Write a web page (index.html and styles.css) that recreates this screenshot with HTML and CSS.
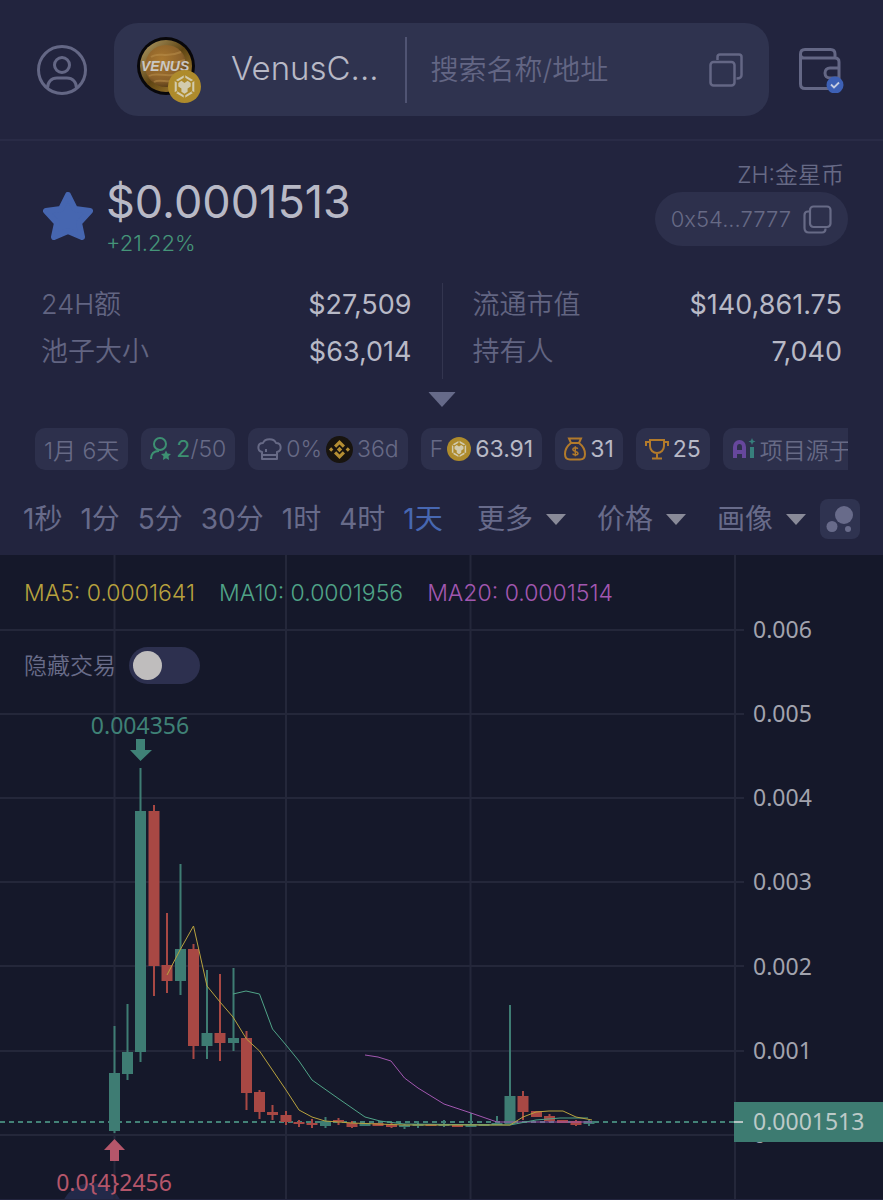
FILE: index.html
```html
<!DOCTYPE html>
<html lang="zh-CN">
<head>
  <meta charset="UTF-8" />
  <title>VenusC $0.0001513</title>
  <meta name="viewport" content="width=device-width, initial-scale=1.0" />
  <link rel="stylesheet" href="styles.css">
</head>
<body>
  <!-- shared symbols -->
  <svg class="defs" aria-hidden="true">
    <symbol id="bnb" viewBox="0 0 32 32">
      <circle cx="16" cy="16" r="16" fill="#ae8b2c" />
      <path d="M16 6 24.500 11V21L16 26 7.500 21V11Z" fill="none" stroke="#d2cbae" stroke-width="2" />
      <path d="M16 3v5M5 9l5 3M27 9l-5 3M5 23l4-2M27 23l-4-2M16 29v-5" stroke="#ae8b2c" stroke-width="1.500" />
      <path d="M10 12.500 13 10.500 16 12.500 19 10.500 22 12.500V16L19 18V21L16 23 13 21V18L10 16Z" fill="#d2cbae" />
    </symbol>
    <symbol id="caret" viewBox="0 0 20 11">
      <path d="M0 0h20L10 11Z" fill="currentColor" />
    </symbol>
  </svg>

  <header class="top-bar">
    <button class="icon-btn" type="button" aria-label="账户">
      <svg width="50" height="50" viewBox="0 0 50 50" fill="none" stroke="currentColor" stroke-width="3">
        <circle cx="25" cy="25" r="23.500" />
        <circle cx="25" cy="20" r="7.500" />
        <path d="M10.500 43c0-6 4-10 9.500-10h10c5.500 0 9.500 4 9.500 10" />
      </svg>
    </button>

    <div class="search">
      <div class="coin">
        <svg width="58" height="58" viewBox="0 0 58 58">
          <defs>
            <linearGradient id="rim" x1="0" y1="0" x2="1" y2="1">
              <stop offset="0" stop-color="#b5a06a" />
              <stop offset=".5" stop-color="#5e4413" />
              <stop offset="1" stop-color="#b38a35" />
            </linearGradient>
            <radialGradient id="planet" cx=".4" cy=".35" r=".7">
              <stop offset="0" stop-color="#a8772f" />
              <stop offset=".7" stop-color="#8a602a" />
              <stop offset="1" stop-color="#4f3615" />
            </radialGradient>
          </defs>
          <circle cx="29" cy="29" r="29" fill="#08070a" />
          <circle cx="29" cy="29" r="26" fill="url(#rim)" />
          <circle cx="29" cy="29" r="21" fill="url(#planet)" />
          <path d="M14 20c8-6 14 2 30-5M10 27c10-7 20 3 38-4M12 39c8-5 18 3 33-3M17 45c6-4 14 2 23-2" fill="none" stroke="#bb914d" stroke-width="2" opacity=".5" />
          <text x="4" y="34" class="coin-text">VENUS</text>
        </svg>
        <svg class="chain" width="33" height="33"><use href="#bnb" /></svg>
      </div>
      <span class="coin-name">VenusC...</span>
      <span class="split"></span>
      <input type="text" class="search-input" placeholder="搜索名称/地址" aria-label="搜索名称/地址" />
      <button class="icon-btn" type="button" aria-label="粘贴">
        <svg width="34" height="34" viewBox="0 0 34 34" fill="none" stroke="currentColor" stroke-width="2.500">
          <rect x="1.500" y="9" width="24" height="23.500" rx="3" />
          <path d="M8.500 7V4c0-1.500 1-2.500 2.500-2.500h19c1.500 0 2.500 1 2.500 2.500v18c0 2-1.500 3.500-5 3.500" />
        </svg>
      </button>
    </div>

    <button class="icon-btn" type="button" aria-label="钱包">
      <svg width="45" height="46" viewBox="0 0 45 46" fill="none" stroke="currentColor" stroke-width="3">
        <path d="M36 11V7c0-3-1.500-4.500-4.500-4.500H6C3 2.500 1.500 4 1.500 7v30c0 3 1.500 4.500 4.500 4.500h29c3 0 5-1.500 5-4.500V15c0-2.500-1.500-4-4-4H5c-2 0-3.500-1-3.500-3.500M40 21h-9c-3 0-5 2-5 5s2 5 5 5h9" />
        <circle cx="36" cy="38" r="8.500" fill="#3d60b5" stroke="none" />
        <path d="m32 37.500 3 3 5-5" stroke="#c4cbe0" stroke-width="1.800" />
      </svg>
    </button>
  </header>

  <main>
    <section class="token">
      <button class="star" type="button" aria-label="收藏">
        <svg width="50" height="48" viewBox="0 0 50 48">
          <path d="m25 3 7 14 15 2-11 12 3 14-14-6-14 6 3-14L3 19l15-2Z" fill="currentColor" stroke="currentColor" stroke-width="6" stroke-linejoin="round" />
        </svg>
      </button>
      <div class="price-box">
        <h1 class="price">$0.0001513</h1>
        <p class="change">+21.22%</p>
      </div>
      <div class="address-box">
        <span class="zh-name">ZH:金星币</span>
        <button class="address" type="button">
          0x54...7777
          <svg width="29" height="29" viewBox="0 0 29 29" fill="none" stroke="currentColor" stroke-width="2.200">
            <rect x="7" y="1.500" width="20.500" height="20.500" rx="3.500" />
            <path d="M6 6.500H5C2.500 6.500 1.500 8 1.500 10v13c0 3 1.500 4.500 4.500 4.500h13c2.500 0 3.500-1 3.500-4" />
          </svg>
        </button>
      </div>
    </section>

    <section class="stats">
      <dl>
        <div><dt>24H额</dt><dd>$27,509</dd></div>
        <div><dt>池子大小</dt><dd>$63,014</dd></div>
      </dl>
      <dl>
        <div><dt>流通市值</dt><dd>$140,861.75</dd></div>
        <div><dt>持有人</dt><dd>7,040</dd></div>
      </dl>
    </section>
    <button class="expand" type="button" aria-label="展开">
      <svg width="28" height="15" viewBox="0 0 20 11"><use href="#caret" /></svg>
    </button>

    <div class="tags">
      <span class="tag">1月 6天</span>
      <span class="tag">
        <svg class="green" width="22" height="24" viewBox="0 0 22 24" fill="none" stroke="currentColor" stroke-width="2">
          <circle cx="10" cy="7" r="6" />
          <path d="M1 22c0-5 3-8 8-8" />
          <path d="m16 13.500 1.500 3 3.500.5-2.500 2.300.6 3.700-3.100-1.700-3.100 1.700.6-3.700L11 17l3.500-.5Z" fill="currentColor" stroke="none" />
        </svg>
        <span><b class="green">2</b>/50</span>
      </span>
      <span class="tag">
        <svg width="25" height="23" viewBox="0 0 25 23" fill="none" stroke="currentColor" stroke-width="2" stroke-linejoin="round">
          <path d="M5 21v-7c-5-1-5-9 1-9 2-5 11-5 13 0 6 0 6 8 1 9v7ZM5 17h15M9 11v3" />
        </svg>
        0%
        <svg width="27" height="27" viewBox="0 0 27 27">
          <circle cx="13.500" cy="13.500" r="13.500" fill="#18140f" />
          <path d="m8 9.500 5.500-5.500L19 9.500l-2.200 2.200-3.300-3.300-3.300 3.300ZM8 17.500l2.200-2.200 3.300 3.300 3.300-3.300 2.200 2.200-5.500 5.500ZM3 13.500l2.200-2.200 2.200 2.200-2.200 2.200ZM19.600 13.500l2.200-2.200 2.200 2.200-2.200 2.200ZM10.800 13.500l2.700-2.700 2.700 2.700-2.700 2.700Z" fill="#b48e33" />
        </svg>
        36d
      </span>
      <span class="tag">
        F
        <svg width="24" height="24"><use href="#bnb" /></svg>
        <b>63.91</b>
      </span>
      <span class="tag">
        <svg class="amber" width="22" height="24" viewBox="0 0 22 24" fill="none" stroke="currentColor" stroke-width="2">
          <path d="M5 1.500h12l-2 4.500H7ZM7 6C3 9 1 13 1 17c0 4 2 5.500 5 5.500h10c3 0 5-1.500 5-5.500 0-4-2-8-6-11" />
          <path d="M13.800 11.800c-1-1.500-5-1.300-5 .8 0 2.400 5.200 1.200 5.200 3.600 0 2.200-4.400 2.200-5.400.4M11.300 9.300v10" stroke-width="1.500" />
        </svg>
        <b>31</b>
      </span>
      <span class="tag">
        <svg class="amber" width="24" height="22" viewBox="0 0 24 22" fill="none" stroke="currentColor" stroke-width="2">
          <path d="M5 2h14v6c0 4-3 7-7 7s-7-3-7-7ZM5 4H1v4M19 4h4v4M12 15v5M7 20.500h10" />
        </svg>
        <b>25</b>
      </span>
      <span class="tag">
        <svg width="24" height="22" viewBox="0 0 24 22" fill="none" stroke-width="4">
          <path d="M3 20V9c0-3 2-5 4.500-5S12 6 12 9v11M3 14h9" stroke="#66479c" />
          <path d="M20 9v11" stroke="#377f7c" />
          <path d="m20 0 1 2.500L23.500 3.500 21 4.500 20 7l-1-2.500-2.500-1L19 2.500Z" fill="#377f7c" />
        </svg>
        项目源于
      </span>
    </div>

    <nav class="intervals">
      <div class="times">
        <button type="button">1秒</button>
        <button type="button">1分</button>
        <button type="button">5分</button>
        <button type="button">30分</button>
        <button type="button">1时</button>
        <button type="button">4时</button>
        <button type="button" class="active">1天</button>
      </div>
      <div class="menus">
        <label class="menu">
          <select aria-label="更多周期"><option>更多</option></select>
          <svg width="20" height="11"><use href="#caret" /></svg>
        </label>
        <label class="menu">
          <select aria-label="价格类型"><option>价格</option></select>
          <svg width="20" height="11"><use href="#caret" /></svg>
        </label>
        <label class="menu">
          <select aria-label="画像类型"><option>画像</option></select>
          <svg width="20" height="11"><use href="#caret" /></svg>
        </label>
      </div>
      <button class="bubbles" type="button" aria-label="气泡图">
        <svg width="28" height="28" viewBox="0 0 28 28" fill="currentColor">
          <circle cx="18" cy="10" r="9" />
          <circle cx="6" cy="21.500" r="5.500" />
          <circle cx="22" cy="24" r="3" />
        </svg>
      </button>
    </nav>

    <section class="chart">
      <div class="chart-head">
        <p class="legend">
          <span class="ma5">MA5: 0.0001641</span>
          <span class="ma10">MA10: 0.0001956</span>
          <span class="ma20">MA20: 0.0001514</span>
        </p>
        <label class="hide-trades">
          隐藏交易
          <input type="checkbox" class="switch" />
        </label>
      </div>

      <svg class="plot" viewBox="0 0 883 644">
        <circle cx="92" cy="660" r="32" fill="#232949" />

        <!-- grid -->
        <path class="grid" d="M0 75H744M0 159H744M0 243H744M0 327H744M0 411H744M0 496H744M0 580H744M114.500 0V644M286 0V644M470.500 0V644M735 0V644" />

        <!-- price scale -->
        <g class="scale">
          <text x="753" y="83">0.006</text>
          <text x="753" y="167">0.005</text>
          <text x="753" y="251">0.004</text>
          <text x="753" y="335">0.003</text>
          <text x="753" y="420">0.002</text>
          <text x="753" y="504">0.001</text>
          <text x="753" y="588">0</text>
        </g>

        <path class="last-line" d="M0 567H735" />

        <!-- candles: wicks, then bodies -->
        <path class="up wick" d="M114.500 471V578M127.500 449V525M140.500 213V507M180.500 309V440M207 415V504M233.500 413V496M325.500 562V573M404.500 569V574M418 566V573M444 565V572M471 558V572M497 561V570M510 450V569M589 565V571" />
        <path class="down wick" d="M154 250V441M167 358V438M193.500 389V504M220 419V506M246.500 476V555M259.500 535V564M272.500 550V565M286 556V570M299 565V572M312 564V573M338.500 563V570M352 566V573M391.500 567V573M523 536V565M549.500 559V567M576 565V571" />
        <path class="up body" d="M114.500 518V576M127.500 497V519M140.500 256V497M180.500 394V426M207 478V491M233.500 483V488M325.500 566V571M365 568V571M404.500 570V572M418 569V571M444 569V571M471 569V572M484 569V571M497 568V570M510 541V569M589 566V569" />
        <path class="down body" d="M154 256V411M167 410V426M193.500 394V491M220 478V488M246.500 483V538M259.500 537V557M272.500 557V560M286 560V567M299 567V569M312 568V570M338.500 565V567M352 568V572M378 568V571M391.500 569V572M431 569V571M457.500 569V572M523 541V557M536.500 556V562M549.500 561V566M562.500 565V568M576 566V570" />

        <!-- moving averages -->
        <path class="ma ma20" d="M365 500 378 502 391 506 404.500 523 418 533 431 541 444 549 471 558 497 567 592 567" />
        <path class="ma ma10" d="M233 439 246 436 259.500 439 272.500 474 286 490 299 506 312 525 339 544 365 562 380 566 404 569 510 570 536 565 560 563 588 563" />
        <path class="ma ma5" d="M167 420 180 395 193.500 371 207 431 220 447 233 462 246.500 484 259.500 496 286 535 299 555 312 562 325 566 352 568 404 570 510 570 523 562 536 557 549 556 563 556 576 562 592 565" />

        <!-- high and low marks -->
        <path class="high" d="M136 184h9v11h7l-11.500 11L130 195h6Z" />
        <text class="high" x="140" y="179">0.004356</text>
        <path class="low" d="M114.500 584 125 595h-6v11h-9V595h-6Z" />
        <text class="low" x="114" y="636">0.0{4}2456</text>

        <!-- last price -->
        <rect x="734" y="547" width="149" height="40" fill="#3d7b71" />
        <path d="M734 567h9" stroke="#b6c4c3" stroke-width="2" />
        <text class="last-price" x="753" y="575">0.0001513</text>
      </svg>
    </section>
  </main>
</body>
</html>
```
FILE: styles.css
```css
* {
  margin: 0;
  padding: 0;
  box-sizing: border-box;
}

body {
  background: #22243e;
  color: #b8b9c6;
  font-family: Inter, 'Noto Sans CJK SC', sans-serif;
  font-weight: 350;
  min-height: 100vh;
  overflow-x: hidden;
}

button, input, select {
  font: inherit;
  color: inherit;
  background: none;
  border: none;
}

button {
  cursor: pointer;
}

svg {
  display: block;
  flex-shrink: 0;
}

b {
  font-weight: 400;
}

.defs {
  display: none;
}

/* header */
.top-bar {
  display: flex;
  align-items: center;
  padding: 23px 39px 23px 37px;
  border-bottom: 2px solid #292b46;
}

.icon-btn {
  color: #646785;
}

.search {
  flex: 1;
  min-width: 0;
  display: flex;
  align-items: center;
  height: 93px;
  margin: 0 30px 0 27px;
  padding: 0 26px 0 23px;
  border-radius: 24px;
  background: #2f334f;
}

.coin {
  position: relative;
  padding-bottom: 8px;
}

.coin-text {
  font: italic bold 14px 'Liberation Sans', sans-serif;
  fill: #c9c7c4;
}

.chain {
  position: absolute;
  right: -6px;
  bottom: 0;
}

.coin-name {
  margin-left: 36px;
  padding-bottom: 3px;
  font-size: 33px;
}

.split {
  width: 2px;
  height: 66px;
  margin: 0 24px 0 26px;
  background: #505473;
}

.search-input {
  flex: 1;
  min-width: 0;
  font-size: 28px;
  outline: none;
}

.search-input::placeholder {
  color: #636684;
  opacity: 1;
}

/* price */
.token {
  display: flex;
  padding: 17px 35px 0 43px;
}

.star {
  align-self: flex-start;
  margin-top: 34px;
  color: #4666b0;
}

.price-box {
  flex: 1;
  margin: 16px 0 0 13px;
}

.price {
  font-size: 45px;
  line-height: 56px;
  font-weight: 400;
}

.change {
  font-size: 22px;
  line-height: 26px;
  color: #459579;
}

.address-box {
  display: flex;
  flex-direction: column;
  align-items: flex-end;
  color: #676a86;
}

.zh-name {
  margin-right: 4px;
  font-size: 23px;
  line-height: 34px;
}

.address {
  display: flex;
  align-items: center;
  gap: 12px;
  height: 54px;
  padding: 0 16px;
  border-radius: 27px;
  background: #2d304c;
  font-size: 22px;
}

/* stats */
.stats {
  display: grid;
  grid-template-columns: 1fr 1fr;
  padding: 27px 41px 0;
}

.stats dl {
  padding-right: 30px;
  font-size: 27px;
}

.stats dl + dl {
  padding: 0 0 0 30px;
  border-left: 1px solid #33354f;
}

.stats dl div {
  display: flex;
  justify-content: space-between;
  line-height: 44px;
}

.stats dl div + div {
  padding: 3px 0 5px;
}

.stats dt {
  color: #626582;
}

.stats dd {
  font-weight: 400;
}

.expand {
  display: block;
  margin: 13px auto 0;
  color: #666a89;
}

/* tags */
.tags {
  display: flex;
  gap: 13px;
  margin: 21px 35px 0;
  overflow: hidden;
}

.tag {
  flex-shrink: 0;
  display: flex;
  align-items: center;
  gap: 4px;
  height: 42px;
  padding: 0 9px;
  border-radius: 10px;
  background: #2d304c;
  color: #676a86;
  font-size: 23px;
  white-space: nowrap;
}

.tag b {
  color: #b8b9c6;
}

.green,
.tag b.green {
  color: #3d9072;
}

.amber {
  color: #b27a2b;
}

/* intervals */
.intervals {
  display: flex;
  align-items: center;
  height: 85px;
  padding: 13px 23px 0;
  font-size: 28px;
  line-height: 40px;
  font-weight: 400;
  color: #686b8a;
}

.times {
  display: flex;
  gap: 18px;
}

.times .active {
  color: #4767b1;
}

.menus {
  display: flex;
  gap: 31px;
  margin: 0 14px 0 auto;
}

.menu {
  display: flex;
  align-items: center;
  gap: 12px;
}

.menu select {
  appearance: none;
  height: 40px;
}

.menu svg {
  color: #898a98;
}

.bubbles {
  display: flex;
  align-items: center;
  justify-content: center;
  width: 40px;
  height: 40px;
  border-radius: 8px;
  background: #2f3350;
}

/* chart */
.chart {
  position: relative;
  background: #15182a;
}

.plot {
  width: 100%;
  height: auto;
}

.chart-head {
  position: absolute;
  top: 22px;
  left: 24px;
}

.legend {
  display: flex;
  gap: 24px;
  font-size: 23px;
  line-height: 32px;
}

.ma5 { color: #b8a23e; }
.ma10 { color: #50a488; }
.ma20 { color: #a257b0; }

.hide-trades {
  display: inline-flex;
  align-items: center;
  gap: 13px;
  margin-top: 38px;
  font-size: 23px;
  line-height: 32px;
  color: #696c89;
}

.switch {
  appearance: none;
  width: 71px;
  height: 37px;
  padding: 4px;
  border-radius: 19px;
  background: #2d304f;
}

.switch::before {
  content: '';
  display: block;
  width: 29px;
  height: 29px;
  border-radius: 50%;
  background: #bfbdbd;
}

.switch:checked {
  padding-left: 38px;
}

.plot text {
  font-family: 'Noto Sans', sans-serif;
  font-size: 23px;
  font-weight: 400;
}

.grid {
  stroke: #24273a;
  stroke-width: 2;
}

.scale {
  fill: #a2a3ae;
}

.last-line {
  stroke: #438277;
  stroke-width: 2;
  stroke-dasharray: 5 4;
}

.up { stroke: #3e7c73; }
.down { stroke: #a84844; }
.wick { stroke-width: 2; }
.body { stroke-width: 11; }

.ma {
  fill: none;
  stroke: currentColor;
  stroke-width: 1;
}

.high { fill: #3f8176; }
.low { fill: #b5566a; }

.plot text.high,
.plot text.low {
  text-anchor: middle;
}

.last-price {
  fill: #bccac8;
}
```
